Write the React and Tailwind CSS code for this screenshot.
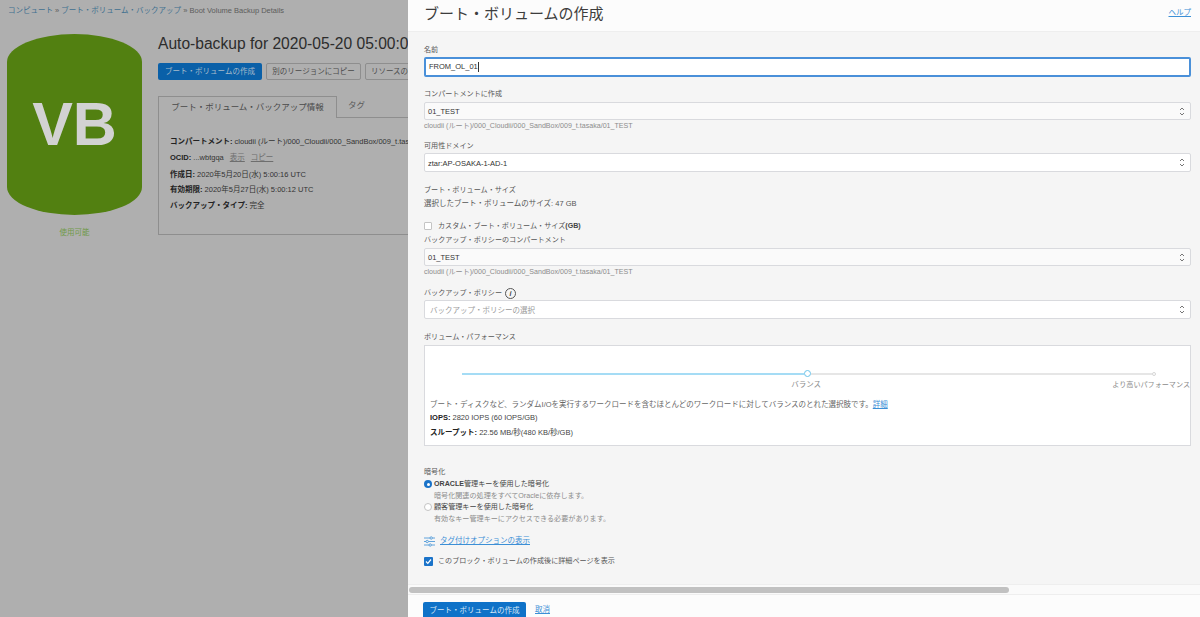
import React from 'react';

const Label = ({ className = '', children }) => (
  <div className={`text-[7.1px] leading-[10px] text-[#555] ${className}`}>{children}</div>
);

const Hint = ({ children }) => (
  <div className="mt-[1px] text-[7.1px] leading-[10px] text-[#8c8c8c]">{children}</div>
);

const UpDown = () => (
  <svg width="6" height="11" viewBox="0 0 6 11" fill="none" stroke="#777" strokeWidth="1">
    <path d="M1 4 3 2 5 4" />
    <path d="M1 7 3 9 5 7" />
  </svg>
);

const Select = ({ value, placeholder, tint = false, className = '' }) => (
  <div
    className={`flex items-center justify-between rounded-[2px] border border-[#d9dade] pl-[3px] pr-[5px] text-[7.5px] ${
      tint ? 'h-[18px] bg-[#fafafa]' : 'h-[19px] bg-white'
    } ${className}`}
  >
    {placeholder ? (
      <span className="mt-[2px] pl-[2px] text-[#9a9a9a]">{placeholder}</span>
    ) : (
      <span className="mt-[2px] text-[#333]">{value}</span>
    )}
    <UpDown />
  </div>
);

const BackupRow = ({ label, children, className = '' }) => (
  <div className={`leading-[10px] ${className}`}>
    <span className="font-bold text-[#222]">{label}</span> <span className="text-[#333]">{children}</span>
  </div>
);

const LeftPage = () => (
  <div className="h-full w-[408px] shrink-0 overflow-hidden whitespace-nowrap bg-[#afafaf] text-[7.5px]">
    <div className="pl-[8px] pt-[6px] leading-[10px] text-[#5c5c5c]">
      <span className="text-[#3f708f]">コンピュート</span> » <span className="text-[#3f708f]">ブート・ボリューム・バックアップ</span> » Boot Volume Backup Details
    </div>
    <div className="flex pt-[18px]">
      <div className="ml-[7px] w-[135px] shrink-0">
        <div className="flex h-[181px] items-center justify-center rounded-[67.5px/28px] bg-[#528011] text-[61px] font-bold leading-none text-[#d2d2d2]">
          VB
        </div>
        <div className="mt-[13px] text-center text-[7.5px] leading-[10px] text-[#6f9a48]">使用可能</div>
      </div>
      <div className="ml-[16px] min-w-0 grow">
        <div className="text-[15.6px] leading-[20px] text-[#2c2c2c]">Auto-backup for 2020-05-20 05:00:05</div>
        <div className="mt-[9px] flex gap-[4px]">
          <div className="flex h-[17px] w-[104px] shrink-0 items-center justify-center rounded-[2px] bg-[#0a60a8] text-[#a9bccb]">ブート・ボリュームの作成</div>
          <div className="flex h-[17px] w-[95px] shrink-0 items-center justify-center rounded-[2px] border border-[#8e8e8e] text-[#4a4a4a]">別のリージョンにコピー</div>
          <div className="flex h-[17px] w-[80px] shrink-0 items-center rounded-[2px] border border-[#8e8e8e] pl-[5px] text-[#4a4a4a]">リソースの移動</div>
        </div>
        <div className="mt-[16px] flex h-[22px] items-end">
          <div className="flex h-[22px] w-[179px] shrink-0 items-center justify-center border border-b-0 border-[#8e8e8e] text-[8.5px] text-[#4a4a4a]">ブート・ボリューム・バックアップ情報</div>
          <div className="flex h-[21px] grow items-center border-b border-[#8e8e8e] pb-[3px] pl-[11px] text-[8.5px] text-[#5c5c5c]">タグ</div>
        </div>
        <div className="h-[117px] border-b border-l border-[#8e8e8e] pl-[11px] pt-[19px]">
          <BackupRow label="コンパートメント:">cloudii (ルート)/000_Cloudii/000_SandBox/009_t.tasaka/01_TEST</BackupRow>
          <BackupRow label="OCID:" className="mt-[6px]">
            ...wbtgqa<span className="ml-[6px] text-[#6e6e6e] underline">表示</span><span className="ml-[6px] text-[#6e6e6e] underline">コピー</span>
          </BackupRow>
          <BackupRow label="作成日:" className="mt-[7px]">2020年5月20日(水) 5:00:16 UTC</BackupRow>
          <BackupRow label="有効期限:" className="mt-[5px]">2020年5月27日(水) 5:00:12 UTC</BackupRow>
          <BackupRow label="バックアップ・タイプ:" className="mt-[6px]">完全</BackupRow>
        </div>
      </div>
    </div>
  </div>
);

const VolumePerformance = () => (
  <div className="mt-[3px] h-[101px] border border-[#d9dade] bg-white pl-[5px] pt-[24px]">
    <div className="ml-[32px] flex h-[7px] items-center">
      <div className="h-[2px] w-[342px] bg-[#a5dcf5]" />
      <div className="h-[7px] w-[7px] shrink-0 rounded-full border border-[#6cc3ea] bg-white" />
      <div className="h-[2px] w-[341px] bg-[#e6e6e6]" />
      <div className="h-[4px] w-[4px] shrink-0 rounded-full border border-[#d6d6d6] bg-white" />
    </div>
    <div className="mt-[3px] flex text-[7.5px] leading-[10px] text-[#8a8a8a]">
      <div className="ml-[357px] w-[40px] text-center">バランス</div>
      <div className="ml-[287px] whitespace-nowrap text-[7.1px]">より高いパフォーマンス</div>
    </div>
    <div className="mt-[10px] leading-[10px] text-[#666]">
      ブート・ディスクなど、ランダムI/Oを実行するワークロードを含むほとんどのワークロードに対してバランスのとれた選択肢です。
      <span className="text-[#3c8fd6] underline">詳細</span>
    </div>
    <div className="mt-[3px] leading-[10px] text-[#444]">
      <span className="font-bold text-[#222]">IOPS:</span> 2820 IOPS (60 IOPS/GB)
    </div>
    <div className="mt-[5px] leading-[10px] text-[#444]">
      <span className="font-bold text-[#222]">スループット:</span> 22.56 MB/秒(480 KB/秒/GB)
    </div>
  </div>
);

const Radio = ({ checked, title, hint }) => (
  <div className="text-[7.1px]">
    <div className="flex h-[10px] items-center gap-[2px]">
      {checked ? (
        <span className="flex h-[8px] w-[8px] items-center justify-center rounded-full bg-[#1a73c9]">
          <span className="h-[3px] w-[3px] rounded-full bg-white" />
        </span>
      ) : (
        <span className="h-[8px] w-[8px] rounded-full border border-[#c4c4c4] bg-white" />
      )}
      <span className="text-[#444]">{title}</span>
    </div>
    <div className="mt-[2px] pl-[10px] leading-[10px] text-[#8c8c8c]">{hint}</div>
  </div>
);

const TagIcon = () => (
  <svg width="11" height="11" viewBox="0 0 11 11" fill="none" stroke="#3c8fd6" strokeWidth="0.8">
    <path d="M0 2h6M8.5 2H11M0 5.5h2M4.5 5.5H11M0 9h5M7.5 9H11" />
    <circle cx="7.2" cy="2" r="1.2" />
    <circle cx="3.2" cy="5.5" r="1.2" />
    <circle cx="6.2" cy="9" r="1.2" />
  </svg>
);

const Panel = () => (
  <div className="flex h-full min-w-0 grow flex-col bg-[#f5f5f5] text-[7.5px]">
    <div className="flex h-[32px] shrink-0 items-start justify-between border-b border-[#eeeeee] bg-[#fcfcfc] pl-[16px] pr-[9px] pt-[4px]">
      <div className="text-[15px] leading-[20px] text-[#3d3d3d]">ブート・ボリュームの作成</div>
      <div className="mt-[4px] text-[7.5px] leading-[10px] text-[#3c8fd6] underline">ヘルプ</div>
    </div>

    <div className="min-h-0 grow overflow-hidden pl-[16px] pr-[9px] pt-[13px]">
      <Label>名前</Label>
      <div className="mt-[2px] flex h-[20px] items-center rounded-[2px] border-2 border-[#4a90d9] bg-white pl-[3px] text-[#333]">
        FROM_OL_01<span className="h-[10px] w-[1px] bg-[#333]" />
      </div>

      <Label className="mt-[12px]">コンパートメントに作成</Label>
      <Select value="01_TEST" tint className="mt-[3px]" />
      <Hint>cloudii (ルート)/000_Cloudii/000_SandBox/009_t.tasaka/01_TEST</Hint>

      <Label className="mt-[10px]">可用性ドメイン</Label>
      <Select value="ztar:AP-OSAKA-1-AD-1" className="mt-[2px]" />

      <Label className="mt-[13px]">ブート・ボリューム・サイズ</Label>
      <div className="mt-[4px] leading-[10px] text-[#555]">選択したブート・ボリュームのサイズ: 47 GB</div>

      <div className="mt-[12px] flex h-[10px] items-center text-[7.1px]">
        <span className="h-[8px] w-[8px] rounded-[1px] border border-[#c4c4c4] bg-white" />
        <span className="ml-[6px] text-[#555]">カスタム・ブート・ボリューム・サイズ<span className="font-bold text-[#444]">(GB)</span></span>
      </div>
      <Label className="mt-[4px]">バックアップ・ポリシーのコンパートメント</Label>
      <Select value="01_TEST" tint className="mt-[3px]" />
      <Hint>cloudii (ルート)/000_Cloudii/000_SandBox/009_t.tasaka/01_TEST</Hint>

      <div className="mt-[10px] flex h-[12px] items-center gap-[3px] text-[7.1px] text-[#555]">
        バックアップ・ポリシー
        <span className="flex h-[11px] w-[11px] items-center justify-center rounded-full border border-[#555] text-[7px] font-bold italic leading-none text-[#444]">i</span>
      </div>
      <Select placeholder="バックアップ・ポリシーの選択" className="mt-[1px]" />

      <Label className="mt-[13px]">ボリューム・パフォーマンス</Label>
      <VolumePerformance />

      <Label className="mt-[21px]">暗号化</Label>
      <div className="mt-[2px]">
        <Radio checked title={<><span className="font-bold">ORACLE</span>管理キーを使用した暗号化</>} hint="暗号化関連の処理をすべてOracleに依存します。" />
      </div>
      <div className="mt-[1px]">
        <Radio title="顧客管理キーを使用した暗号化" hint="有効なキー管理キーにアクセスできる必要があります。" />
      </div>

      <div className="mt-[11px] flex h-[12px] items-center gap-[5px]">
        <TagIcon />
        <span className="text-[#3c8fd6] underline">タグ付けオプションの表示</span>
      </div>

      <div className="mt-[8px] flex h-[12px] items-center text-[7.1px]">
        <span className="flex h-[9px] w-[9px] items-center justify-center rounded-[1px] bg-[#1a73c9]">
          <svg width="7" height="7" viewBox="0 0 7 7" fill="none" stroke="#fff" strokeWidth="1.2">
            <path d="M1 3.5 2.8 5.3 6 1.5" />
          </svg>
        </span>
        <span className="ml-[5px] text-[#555]">このブロック・ボリュームの作成後に詳細ページを表示</span>
      </div>
    </div>

    <div className="flex h-[11px] shrink-0 items-center border-y border-[#eeeeee] bg-[#fafafa] pl-[1px]">
      <div className="h-[6px] w-[600px] rounded-full bg-[#c1c1c1]" />
    </div>
    <div className="flex h-[22px] shrink-0 items-start bg-[#fcfcfc] pl-[15px] pt-[7px]">
      <div className="flex h-[17px] w-[103px] shrink-0 items-center justify-center rounded-[2px] bg-[#0f72c8] text-[#d8e8f6]">ブート・ボリュームの作成</div>
      <div className="ml-[9px] mt-[3px] leading-[10px] text-[#3c8fd6] underline">取消</div>
    </div>
  </div>
);

export default function App() {
  return (
    <div className="flex h-[617px] w-[1200px] overflow-hidden font-['Liberation_Sans','Noto_Sans_CJK_JP',sans-serif]">
      <LeftPage />
      <Panel />
    </div>
  );
}
